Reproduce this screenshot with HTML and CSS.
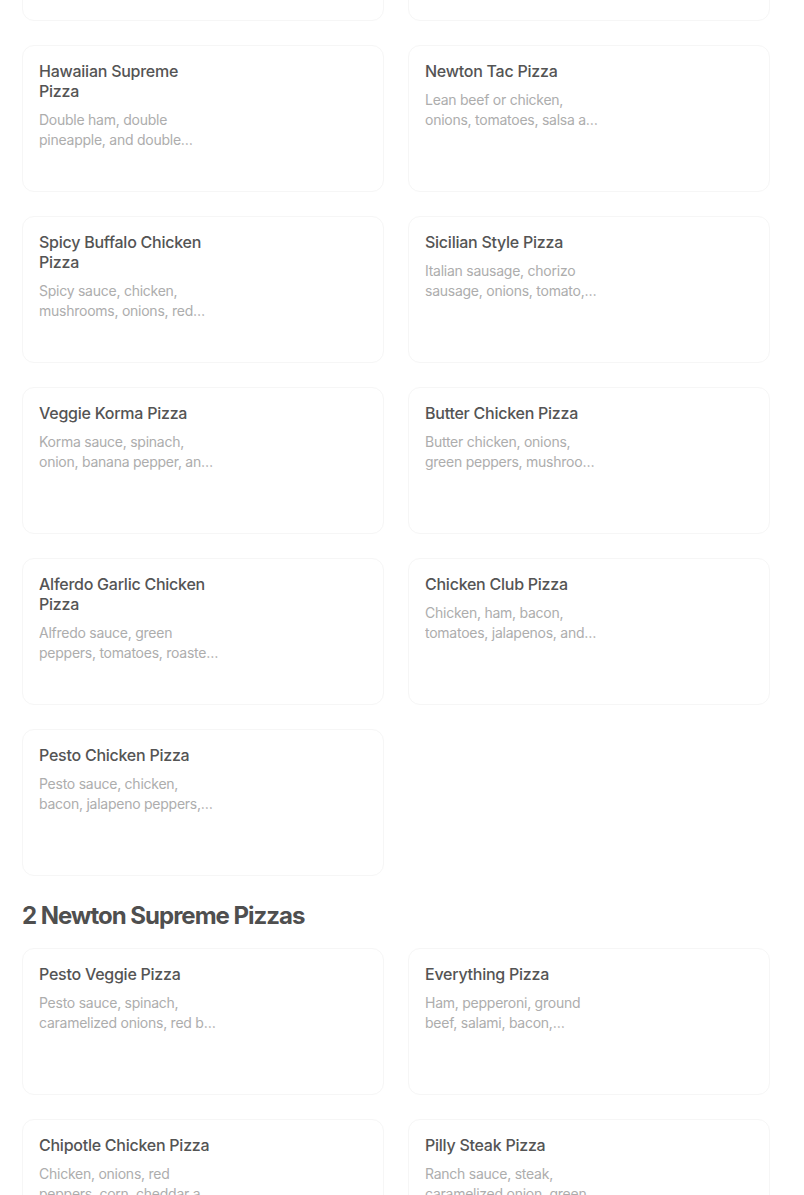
FILE: index.html
```html
<!DOCTYPE html>
<html lang="en">
<head>
<meta charset="utf-8">
<title>Menu</title>
<link rel="stylesheet" href="styles.css">
</head>
<body>
<main class="menu">
  <section class="section section-first">
    <div class="grid">
      <div class="card"><div class="info"><h3 class="title">Newton Supreme Pizza</h3><p class="desc">Pepperoni, ham, beef, Italian sausage, onions, green peppers and mushrooms.</p></div></div>
      <div class="card"><div class="info"><h3 class="title">Meat Lovers Pizza</h3><p class="desc">Pepperoni, ham, beef, Italian sausage and bacon.</p></div></div>
      <div class="card"><div class="info"><h3 class="title">Hawaiian Supreme Pizza</h3><p class="desc">Double ham, double pineapple, and double cheese.</p></div></div>
      <div class="card"><div class="info"><h3 class="title">Newton Tac Pizza</h3><p class="desc">Lean beef or chicken, onions, tomatoes, salsa and cheddar cheese.</p></div></div>
      <div class="card"><div class="info"><h3 class="title">Spicy Buffalo Chicken Pizza</h3><p class="desc">Spicy sauce, chicken, mushrooms, onions, red peppers and cheddar.</p></div></div>
      <div class="card"><div class="info"><h3 class="title">Sicilian Style Pizza</h3><p class="desc">Italian sausage, chorizo sausage, onions, tomato, and hot peppers.</p></div></div>
      <div class="card"><div class="info"><h3 class="title">Veggie Korma Pizza</h3><p class="desc">Korma sauce, spinach, onion, banana pepper, and tomatoes.</p></div></div>
      <div class="card"><div class="info"><h3 class="title">Butter Chicken Pizza</h3><p class="desc">Butter chicken, onions, green peppers, mushrooms and cilantro.</p></div></div>
      <div class="card"><div class="info"><h3 class="title">Alferdo Garlic Chicken Pizza</h3><p class="desc">Alfredo sauce, green peppers, tomatoes, roasted garlic and chicken.</p></div></div>
      <div class="card"><div class="info"><h3 class="title">Chicken Club Pizza</h3><p class="desc">Chicken, ham, bacon, tomatoes, jalapenos, and ranch sauce.</p></div></div>
      <div class="card"><div class="info"><h3 class="title">Pesto Chicken Pizza</h3><p class="desc">Pesto sauce, chicken, bacon, jalapeno peppers, and tomatoes.</p></div></div>
    </div>
  </section>
  <section class="section">
    <h2 class="section-title">2 Newton Supreme Pizzas</h2>
    <div class="grid">
      <div class="card"><div class="info"><h3 class="title">Pesto Veggie Pizza</h3><p class="desc">Pesto sauce, spinach, caramelized onions, red bell peppers and feta.</p></div></div>
      <div class="card"><div class="info"><h3 class="title">Everything Pizza</h3><p class="desc">Ham, pepperoni, ground beef, salami, bacon, sausage and veggies.</p></div></div>
      <div class="card"><div class="info"><h3 class="title">Chipotle Chicken Pizza</h3><p class="desc">Chicken, onions, red peppers, corn, cheddar and chipotle sauce.</p></div></div>
      <div class="card"><div class="info"><h3 class="title">Pilly Steak Pizza</h3><p class="desc">Ranch sauce, steak, caramelized onion, green peppers and mushrooms.</p></div></div>
    </div>
  </section>
</main>
</body>
</html>
```

FILE: styles.css
```css
* { box-sizing: border-box; }

html, body {
  margin: 0;
  padding: 0;
  background: #ffffff;
}

body {
  font-family: Inter, "Noto Sans", "Liberation Sans", sans-serif;
  color: #545454;
  overflow: hidden;
}

.menu {
  width: 748px;
  margin-left: 22px;
}

.section-first {
  margin-top: -126px;
}

.grid {
  display: grid;
  grid-template-columns: 362px 362px;
  column-gap: 24px;
  row-gap: 24px;
}

.card {
  height: 147px;
  border: 1px solid #f6f6f6;
  border-radius: 12px;
  padding: 15px 16px 16px;
  background: #ffffff;
  display: flex;
}

.info {
  width: 184px;
}

.title {
  margin: 0;
  max-width: 177px;
  font-size: 16px;
  line-height: 20px;
  font-weight: 500;
  color: #545454;
  letter-spacing: -0.25px;
}

.desc {
  margin: 9px 0 0;
  width: 180px;
  font-size: 14px;
  line-height: 20px;
  font-weight: 400;
  color: #adadad;
  letter-spacing: -0.25px;
  display: -webkit-box;
  -webkit-line-clamp: 2;
  -webkit-box-orient: vertical;
  overflow: hidden;
}

.section-title {
  margin: 24px 0 16px;
  font-size: 24px;
  line-height: 32px;
  font-weight: 700;
  color: #4f4f4f;
  letter-spacing: -1px;
}
```
